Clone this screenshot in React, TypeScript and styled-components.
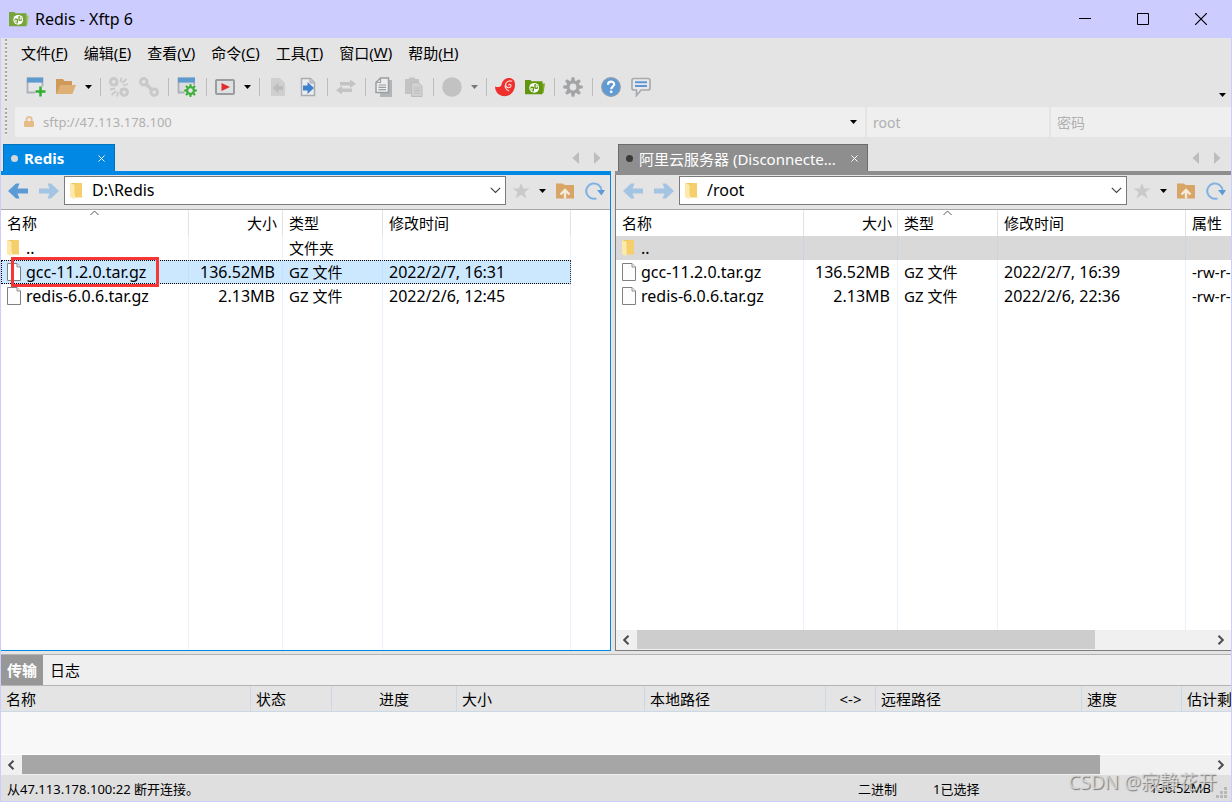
import React from 'react';
import styled, { createGlobalStyle } from 'styled-components';

const GlobalStyle = createGlobalStyle`
  *, *::before, *::after { box-sizing: border-box; }
  html, body { margin: 0; padding: 0; }
  body {
    font-family: "Noto Sans", "Noto Sans CJK SC", sans-serif;
    font-size: 15px;
    color: #000;
    background: #e4e4e4;
  }
  button, input, table {
    font: inherit;
    color: inherit;
  }
  button {
    border: 0;
    padding: 0;
    background: none;
    display: flex;
    align-items: center;
    justify-content: center;
    flex: none;
  }
  svg { display: block; flex: none; }
`;

/* ---------- window frame ---------- */

const Window = styled.div`
  position: relative;
  display: flex;
  flex-direction: column;
  min-height: 100vh;
  overflow: hidden;
  background: #e4e4e4;
  border: 1px solid #ccccff;
  border-top: 0;
`;

const TitleBar = styled.header`
  display: flex;
  align-items: center;
  height: 38px;
  padding: 0 1px 0 8px;
  background: #ccccff;
`;

const Title = styled.h1`
  flex: 1;
  margin: 0 0 0 6px;
  font-size: 16px;
  font-weight: 400;
  line-height: 24px;
`;

const CaptionButton = styled.button`
  width: 58px;
  height: 38px;
`;

/* ---------- menu, toolbar and address row ---------- */

const Band = styled.div<{ $gap?: number }>`
  display: flex;
  padding-left: 4px;
  margin-top: ${(p) => p.$gap ?? 0}px;
`;

const Gripper = styled.span`
  flex: none;
  width: 2px;
  margin: 1px 0;
  background: repeating-linear-gradient(#a6a6a6 0 2px, #f4f4f4 2px 3px, transparent 3px 4px);
`;

const BandBody = styled.div`
  flex: 1;
  min-width: 0;
`;

const MenuBar = styled.nav`
  display: flex;
  gap: 16px;
  height: 32px;
  padding: 0 0 4px 14px;
`;

const MenuItem = styled.button`
  white-space: nowrap;
  u { text-underline-offset: 2px; }
`;

const ToolBar = styled.div`
  display: flex;
  align-items: center;
  height: 34px;
  padding-left: 14px;
`;

const ToolButton = styled.button`
  width: 30px;
  height: 30px;
`;

const CaretButton = styled.button<{ $width?: number }>`
  width: ${(p) => p.$width ?? 15}px;
  height: 30px;
`;

const ToolSeparator = styled.span`
  flex: none;
  width: 8px;
  height: 18px;
  background: linear-gradient(#bcbcbc, #bcbcbc) center / 1px 100% no-repeat;
`;

const OverflowButton = styled.button`
  width: 17px;
  height: 18px;
  margin-left: auto;
  align-self: flex-end;
`;

const LoginRow = styled.form`
  display: grid;
  grid-template-columns: minmax(0, 1fr) 182px 180px;
  gap: 2px;
  height: 29px;
  padding-left: 8px;
`;

const LoginField = styled.label<{ $host?: boolean }>`
  display: flex;
  align-items: center;
  padding: 0 ${(p) => (p.$host ? 4 : 0)}px 0 ${(p) => (p.$host ? 8 : 6)}px;
  background: #efefef;
`;

const LoginInput = styled.input<{ $host?: boolean }>`
  flex: 1;
  min-width: 0;
  height: 29px;
  border: 0;
  padding: 0 0 0 ${(p) => (p.$host ? 8 : 0)}px;
  font-size: ${(p) => (p.$host ? 13 : 14)}px;
  background: none;
  outline: none;
  &::placeholder { color: #b0b0b0; opacity: 1; }
`;

/* ---------- file panes ---------- */

const Panes = styled.main`
  display: grid;
  grid-template-columns: minmax(0, 610fr) minmax(0, 616fr);
  gap: 4px;
  flex: 1;
  margin-top: 8px;
`;

const Pane = styled.section`
  display: flex;
  flex-direction: column;
  min-width: 0;
`;

const TabStrip = styled.div<{ $active: boolean }>`
  display: flex;
  align-items: center;
  height: 31px;
  padding-left: ${(p) => (p.$active ? 2 : 3)}px;
  border-bottom: 4px solid ${(p) => (p.$active ? '#0088e4' : '#8e8e8e')};
`;

const Tab = styled.div<{ $active: boolean }>`
  display: flex;
  align-items: center;
  align-self: stretch;
  width: ${(p) => (p.$active ? 112 : 250)}px;
  padding: 0 7px;
  color: #fff;
  font-weight: ${(p) => (p.$active ? 700 : 400)};
  background: ${(p) => (p.$active ? '#0088e4' : '#8e8e8e')};
  border: 1px solid ${(p) => (p.$active ? '#0072bb' : '#6c6c6c')};
  border-bottom: 0;
`;

const TabDot = styled.span<{ $active: boolean }>`
  flex: none;
  width: 7px;
  height: 7px;
  border-radius: 50%;
  background: ${(p) => (p.$active ? '#d4d8dc' : '#3a3a3a')};
`;

const TabLabel = styled.span`
  flex: 1;
  margin-left: 6px;
  overflow: hidden;
  white-space: nowrap;
`;

const TabClose = styled.button`
  width: 12px;
  height: 20px;
`;

const TabScroll = styled.div`
  display: flex;
  margin-left: auto;
  padding-right: 4px;
`;

const TabScrollButton = styled.button`
  width: 21px;
  height: 20px;
`;

const PaneBody = styled.div<{ $active: boolean }>`
  display: flex;
  flex-direction: column;
  flex: 1;
  border-style: solid;
  border-color: ${(p) => (p.$active ? '#0088e4' : '#7c7c7c')};
  border-width: ${(p) => (p.$active ? '0 1px 1px 0' : '0 0 1px 1px')};
`;

const PathBar = styled.div`
  display: flex;
  align-items: center;
  height: 35px;
  padding: 0 0 3px 1px;
  border-bottom: 1px solid #a8a8a8;
`;

const PathButton = styled.button<{ $width?: number }>`
  width: ${(p) => p.$width ?? 31}px;
  height: 30px;
`;

const PathCombo = styled.label`
  display: flex;
  align-items: center;
  flex: 1;
  min-width: 0;
  height: 29px;
  padding-left: 5px;
  background: #fff;
  border: 1px solid #7a7a7a;
`;

const PathInput = styled.input`
  flex: 1;
  min-width: 0;
  height: 27px;
  margin-left: 8px;
  padding: 0 0 2px;
  border: 0;
  outline: none;
  font-size: 16px;
  background: none;
`;

const DropButton = styled.button`
  width: 20px;
  height: 27px;
`;

const ListArea = styled.div`
  flex: 1;
  display: flex;
  min-height: 200px;
  overflow: hidden;
  background: #fff;
`;

const FileTable = styled.table`
  flex: none;
  table-layout: fixed;
  border-collapse: separate;
  border-spacing: 0;
`;

const FileHead = styled.th<{ $right?: boolean }>`
  position: relative;
  height: 26px;
  padding: 0 ${(p) => (p.$right ? 5 : 0)}px 0 6px;
  text-align: ${(p) => (p.$right ? 'right' : 'left')};
  font-weight: 400;
  line-height: 24px;
  white-space: nowrap;
  border-right: 1px solid #e2e2e2;
`;

const SortMark = styled.span`
  position: absolute;
  top: 0;
  right: 0;
  left: 0;
  display: flex;
  justify-content: center;
`;

const FileRow = styled.tr<{ $state?: 'selected' | 'cursor' }>`
  background: ${(p) =>
    p.$state === 'selected' ? '#cce8ff' : p.$state === 'cursor' ? '#d9d9d9' : 'transparent'};
  outline: ${(p) => (p.$state === 'selected' ? '1px dotted #000' : 'none')};
  outline-offset: -1px;
`;

const FileCell = styled.td<{ $right?: boolean; $latin?: boolean }>`
  position: relative;
  height: 24px;
  padding: 0 ${(p) => (p.$right ? 7 : 0)}px 0 6px;
  text-align: ${(p) => (p.$right ? 'right' : 'left')};
  font-size: ${(p) => (p.$latin ? 16 : 15)}px;
  line-height: 22px;
  white-space: nowrap;
  border-right: 1px solid rgba(170, 205, 245, 0.28);
`;

const NameBox = styled.span`
  display: flex;
  align-items: center;
  gap: 5px;
`;

const RedFrame = styled.span`
  position: absolute;
  top: -3px;
  left: 10px;
  width: 148px;
  height: 30px;
  border: 3px solid #f53636;
`;

const FillerCell = styled.td`
  padding: 0;
  border-right: 1px solid #e8f1fc;
`;

/* ---------- scroll bars ---------- */

const ScrollBar = styled.div`
  display: flex;
  flex: none;
  height: 20px;
  padding-bottom: 1px;
  background: #f0f0f0;
`;

const ScrollArrow = styled.button`
  width: 21px;
`;

const ScrollTrack = styled.div`
  flex: 1;
`;

const ScrollThumb = styled.div<{ $dark?: boolean }>`
  height: 100%;
  background: ${(p) => (p.$dark ? '#a6a6a6' : '#cdcdcd')};
`;

/* ---------- transfer panel ---------- */

const Transfer = styled.section`
  margin-top: 3px;
  border-top: 1px solid #b4b4b4;
`;

const TransferTabs = styled.div`
  display: flex;
  height: 31px;
  background: #efefef;
  border-bottom: 1px solid #b4b4b4;
`;

const TransferTab = styled.button<{ $active?: boolean }>`
  width: ${(p) => (p.$active ? 42 : 44)}px;
  padding-bottom: 2px;
  color: ${(p) => (p.$active ? '#fff' : '#000')};
  font-weight: ${(p) => (p.$active ? 700 : 400)};
  background: ${(p) => (p.$active ? '#979797' : 'none')};
`;

const TransferList = styled.div`
  height: 69px;
  overflow: hidden;
  background: #f8f8f8;
  border-bottom: 1px solid #fff;
`;

const TransferTable = styled.table`
  width: 1299px;
  table-layout: fixed;
  border-collapse: separate;
  border-spacing: 0;
`;

const TransferHead = styled.th<{ $center?: boolean }>`
  height: 26px;
  padding: 0 5px;
  text-align: ${(p) => (p.$center ? 'center' : 'left')};
  font-weight: 400;
  line-height: 24px;
  white-space: nowrap;
  background: #e4e4e4;
  border-right: 1px solid #ccd8e6;
  border-bottom: 1px solid #ccd8e6;
`;

const StatusBar = styled.footer`
  display: flex;
  align-items: center;
  height: 26px;
  padding: 0 20px 0 6px;
  font-size: 13px;
  background: #dfdfdf;
`;

const StatusText = styled.span<{ $width?: number; $right?: boolean }>`
  flex: ${(p) => (p.$width ? 'none' : '1')};
  width: ${(p) => (p.$width ? `${p.$width}px` : 'auto')};
  text-align: ${(p) => (p.$right ? 'right' : 'left')};
  white-space: nowrap;
`;

const SizeGrip = styled.span`
  position: absolute;
  right: 3px;
  bottom: 2px;
`;

const Watermark = styled.span`
  position: absolute;
  right: 14px;
  bottom: 6px;
  font-size: 19px;
  line-height: 26px;
  white-space: nowrap;
  color: rgba(222, 222, 222, 0.8);
  text-shadow: 1px 1px 1px rgba(90, 90, 90, 0.75);
  pointer-events: none;
`;

/* ---------- icons ---------- */

const Caret = ({ color = '#000' }: { color?: string }) => (
  <svg width="7" height="4" viewBox="0 0 7 4"><path d="M0 0h7L3.500 4z" fill={color} /></svg>
);

const XftpIcon = ({ fill, side }: { fill: string; side: string }) => (
  <svg width="20" height="20" viewBox="0 0 20 20">
    <path d="M16 6.500h4L18.500 16H16z" fill={side} />
    <path d="M0 3h5.500l1 1.200H17.500v13H0z" fill={fill} />
    <circle cx="9.200" cy="10.800" r="4.900" fill="#fff" />
    <path d="M10 7.300v4.200M10 11.200h2.600M8.300 14.300V10M8.300 10.300H5.800" fill="none" stroke={fill} strokeWidth="1.400" />
    <path d="M10 7.300c1.800.4 2.800 2 2.600 3.900M8.300 14.300c-1.800-.4-2.800-2-2.500-4" fill="none" stroke={fill} strokeWidth=".7" />
  </svg>
);

const NewSessionIcon = () => (
  <svg width="20" height="20" viewBox="0 0 20 20">
    <path d="M1.500 1.500h15v14h-15z" fill="#e6e6e8" stroke="#aab0b6" strokeWidth="1.800" />
    <path d="M1 .6h16v5H1z" fill="#5c9ad0" />
    <path d="M9 9.500h10v10H9z" fill="#e6e6e8" />
    <path d="M14.500 9.500v10M9.500 14.500h10" stroke="#2eb02e" strokeWidth="2.500" />
  </svg>
);

const OpenFolderIcon = () => (
  <svg width="20" height="20" viewBox="0 0 20 20">
    <path d="M0 2h7l1.500 2H16v13H0z" fill="#cf9a58" />
    <path d="M4.500 8H20l-3.600 9H0z" fill="#deb076" />
  </svg>
);

const LinkShape = ({ broken }: { broken?: boolean }) => (
  <svg width="20" height="20" viewBox="0 0 20 20" fill="none" stroke="#c9c9c9">
    <circle cx="4.800" cy="4.800" r="3.300" strokeWidth="3" />
    <circle cx="15.200" cy="15.200" r="3.300" strokeWidth="3" />
    {broken ? (
      <path
        d="M6.500 6.500l2 2M11.500 11.500l2 2M12.500.5 11.500 5M19 7l-5 1.500M17.500 2l-4.500 4M1 12.500l5-1M2.500 18l4.500-4M8 19.500l1-4.500"
        strokeWidth="1.800"
      />
    ) : (
      <path d="M6.500 6.500l7 7" strokeWidth="3.600" />
    )}
  </svg>
);

const Gear = ({ color, hole, cx = 10, cy = 10, scale = 1 }: {
  color: string; hole: string; cx?: number; cy?: number; scale?: number;
}) => (
  <g transform={`translate(${cx} ${cy}) scale(${scale})`}>
    {[0, 45, 90, 135].map((a) => (
      <path key={a} d="M-1.300-9.800h2.600l.8 3.800v12l-.8 3.800h-2.600l-.8-3.800v-12z" fill={color} transform={`rotate(${a})`} />
    ))}
    <circle r="6.400" fill={color} />
    <circle r="3.400" fill={hole} />
  </g>
);

const SessionPropsIcon = () => (
  <svg width="20" height="20" viewBox="0 0 20 20">
    <path d="M1.500 1.500h15.500v14h-15.500z" fill="#dcdcde" stroke="#aab0b6" strokeWidth="1.800" />
    <path d="M1 .6h17v5H1z" fill="#5c9ad0" />
    <circle cx="13.500" cy="13.500" r="6.500" fill="#e6e6e6" />
    <Gear color="#3fb03f" hole="#e6e6e6" cx={13.5} cy={13.5} scale={0.66} />
  </svg>
);

const RunIcon = () => (
  <svg width="20" height="20" viewBox="0 0 20 20">
    <rect x="1" y="3" width="18" height="14" rx="1" fill="#dfe0e2" stroke="#9a9da0" strokeWidth="2" />
    <path d="M6.500 6 15 10l-8.500 4z" fill="#df2c2c" />
  </svg>
);

const PageArrowIcon = ({ enabled }: { enabled?: boolean }) => (
  <svg width="20" height="20" viewBox="0 0 20 20">
    {enabled ? (
      <>
        <path d="M3.500 1.500h9l4 4v13h-13z" fill="#ececec" stroke="#a9adb1" strokeWidth="1.500" />
        <path d="M12 1v5h5" fill="#c2c5c8" stroke="#a9adb1" />
        <path d="M5 8.500h4.500V5l6.500 6-6.500 6v-3.500H5z" fill="#3f82cc" />
      </>
    ) : (
      <>
        <path d="M3 1h9l5 5v13H3z" fill="#cfcfcf" />
        <path d="M15 9h-4.500V5.500L4.500 11l6 5.500V13H15z" fill="#bcbcbc" />
      </>
    )}
  </svg>
);

const SwapIcon = () => (
  <svg width="20" height="20" viewBox="0 0 20 20" fill="#c3c3c3">
    <path d="M4 5h10V2.500l6 4.200-6 4.300V8.500H4z" />
    <path d="M16 11.500H6V9l-6 4.300 6 4.200V15h10z" />
  </svg>
);

const CopyIcon = () => (
  <svg width="20" height="20" viewBox="0 0 20 20">
    <path d="M6 3h12v17H6z" fill="#b2b5b8" />
    <path d="M6.500 1h8v14.500H2v-10z" fill="#ededed" stroke="#9b9ea1" strokeWidth="1.500" />
    <path d="M6.500 1V5.500H2M4.500 8h7.500M4.500 10.300h7.500M4.500 12.600h7.500" fill="none" stroke="#9b9ea1" strokeWidth="1.200" />
  </svg>
);

const PasteIcon = () => (
  <svg width="20" height="20" viewBox="0 0 20 20">
    <path d="M1 2h4V.6h6V2h4v15H1z" fill="#c3c3c3" />
    <path d="M7.500 5.500h7l3.500 3.500v10.500H7.500z" fill="#d0d0d0" stroke="#bcbcbc" />
    <path d="M10 11h6M10 13.500h6M10 16h6" stroke="#bcbcbc" />
  </svg>
);

const DiscIcon = () => (
  <svg width="20" height="20" viewBox="0 0 20 20"><circle cx="10" cy="10" r="9.800" fill="#c2c2c2" /></svg>
);

const XshellIcon = () => (
  <svg width="20" height="20" viewBox="0 0 20 20">
    <path
      d="M0 9.500c3 1.200 6 .6 6.600-2.100C7.400 3.600 10.400 1 14 1c3.600 0 6 2.400 6 6.400 0 6.600-4.400 11.800-10.400 11.800C4.600 19.200.2 15.600 0 9.500z"
      fill="#ee2f2c"
    />
    <path
      d="M13.800 8.300c-.2-1.200 1.400-1.500 2-.4.700 1.500-.6 3-2.200 2.900-2.200-.1-3.400-2.300-2.700-4.300.9-2.300 3.700-3.200 5.900-2.200M10.900 6.500c-1.600 3-.4 6.300 2.900 7.300"
      fill="none" stroke="#f8dedc" strokeWidth="1.100" strokeLinecap="round"
    />
  </svg>
);

const GearIcon = () => (
  <svg width="20" height="20" viewBox="0 0 20 20"><Gear color="#a2a4a6" hole="#e4e4e4" /></svg>
);

const HelpIcon = () => (
  <svg width="20" height="20" viewBox="0 0 20 20">
    <circle cx="10" cy="10" r="9.300" fill="#5f9ad4" stroke="#8d9dae" strokeWidth="1.200" />
    <path d="M7 7.700c0-4 6.200-3.900 6.200-.5 0 2.300-3 2.300-3 5" fill="none" stroke="#fff" strokeWidth="2.200" />
    <circle cx="10.200" cy="14.800" r="1.400" fill="#fff" />
  </svg>
);

const FeedbackIcon = () => (
  <svg width="20" height="20" viewBox="0 0 20 20">
    <path
      d="M3 1.500h14q2 0 2 2V11q0 2-2 2h-7l-4.500 5.500V13H3q-2 0-2-2V3.500q0-2 2-2z"
      fill="#e8e8e8" stroke="#a7abaf" strokeWidth="1.700"
    />
    <path d="M4 5.300h12M4 8.900h12" stroke="#5c98d6" strokeWidth="2" />
  </svg>
);

const LockIcon = () => (
  <svg width="12" height="12" viewBox="0 0 12 12">
    <path d="M3.500 5.500V3.600a2.600 2.600 0 0 1 5.200 0v1.900" fill="none" stroke="#e6c090" strokeWidth="1.800" />
    <rect x="1" y="5" width="10" height="6" rx="1" fill="#e6bd88" />
  </svg>
);

const ArrowIcon = ({ color, right }: { color: string; right?: boolean }) => (
  <svg width="20" height="16" viewBox="0 0 20 16">
    <path d={right ? 'M0 5.500h10.500L8.500.5h3.500L20 8l-8 7.500H8.500l2-5H0z' : 'M20 5.500H9.500l2-5H8L0 8l8 7.500h3.500l-2-5H20z'} fill={color} />
  </svg>
);

const FolderIcon = () => (
  <svg width="14" height="18" viewBox="0 0 14 18">
    <path d="M2 1h10v12.500l.5 2H5z" fill="#f5cf6c" />
    <path d="M0 1l4.500 1.500v14.800L0 15z" fill="#fde9a9" />
    <path d="M0 1h7l-2.500 1.500z" fill="#efc560" />
  </svg>
);

const FileIcon = () => (
  <svg width="14" height="18" viewBox="0 0 14 18">
    <path d="M.5.500h9.500l3.500 3.500v13.500H.5z" fill="#fdfdfd" stroke="#808080" />
    <path d="M10 .5V4h3.500" fill="#f0f0f0" stroke="#909090" />
  </svg>
);

const ChevronIcon = () => (
  <svg width="11" height="7" viewBox="0 0 11 7"><path d="M.8.8l4.700 4.700L10.200.8" fill="none" stroke="#444" strokeWidth="1.200" /></svg>
);

const SortIcon = () => (
  <svg width="9" height="6" viewBox="0 0 9 6"><path d="M.5 5l4-4 4 4" fill="none" stroke="#555" /></svg>
);

const StarIcon = () => (
  <svg width="18" height="16" viewBox="0 0 18 16">
    <path d="M9 0l2.200 5.600H17.500l-5 3.700 2 6.200L9 11.800l-5.500 3.700 2-6.200-5-3.700h6.300z" fill="#c9cacc" />
  </svg>
);

const UpFolderIcon = () => (
  <svg width="18" height="16" viewBox="0 0 18 16">
    <path d="M0 .5h7l1.500 1.500H18v13.500H0z" fill="#d9a566" />
    <path d="M9 15.500V7M4.500 11.500 9 7l4.500 4.500" fill="none" stroke="#f5ebdd" strokeWidth="2.400" />
  </svg>
);

const RefreshIcon = () => (
  <svg width="20" height="18" viewBox="0 0 20 18">
    <path d="M11.500 16.400A7.700 7.700 0 1 1 16.600 8.500" fill="none" stroke="#7fb2e2" strokeWidth="2" />
    <path d="M12 8h8l-3.500 5.500z" fill="#5c9bd8" />
  </svg>
);

const TriangleIcon = ({ right }: { right?: boolean }) => (
  <svg width="8" height="12" viewBox="0 0 8 12">
    <path d={right ? 'M1 0v12l6.500-6z' : 'M7 0v12L.5 6z'} fill="#bdbdbd" />
  </svg>
);

const CloseX = () => (
  <svg width="7" height="7" viewBox="0 0 7 7"><path d="M.5.500l6 6M6.500.500l-6 6" stroke="#fff" /></svg>
);

const ScrollChevron = ({ right }: { right?: boolean }) => (
  <svg width="8" height="10" viewBox="0 0 8 10">
    <path d={right ? 'M1.500.700l4.300 4.300-4.300 4.300' : 'M5.500.700L1.200 5l4.300 4.300'} fill="none" stroke="#4d4d4d" strokeWidth="2" />
  </svg>
);

/* ---------- data ---------- */

const menus = [
  ['文件', 'F'], ['编辑', 'E'], ['查看', 'V'], ['命令', 'C'],
  ['工具', 'T'], ['窗口', 'W'], ['帮助', 'H'],
];

type Entry = {
  name: string; size: string; type: string; time: string; attr?: string;
  folder?: boolean; state?: 'selected' | 'cursor'; framed?: boolean;
};

const localFiles: Entry[] = [
  { name: '..', size: '', type: '文件夹', time: '', folder: true },
  { name: 'gcc-11.2.0.tar.gz', size: '136.52MB', type: 'GZ 文件', time: '2022/2/7, 16:31', state: 'selected', framed: true },
  { name: 'redis-6.0.6.tar.gz', size: '2.13MB', type: 'GZ 文件', time: '2022/2/6, 12:45' },
];

const remoteFiles: Entry[] = [
  { name: '..', size: '', type: '', time: '', attr: '', folder: true, state: 'cursor' },
  { name: 'gcc-11.2.0.tar.gz', size: '136.52MB', type: 'GZ 文件', time: '2022/2/7, 16:39', attr: '-rw-r--r--' },
  { name: 'redis-6.0.6.tar.gz', size: '2.13MB', type: 'GZ 文件', time: '2022/2/6, 22:36', attr: '-rw-r--r--' },
];

const transferColumns: { label: string; width: number; center?: boolean }[] = [
  { label: '名称', width: 250 },
  { label: '状态', width: 81 },
  { label: '进度', width: 125, center: true },
  { label: '大小', width: 188 },
  { label: '本地路径', width: 181 },
  { label: '<->', width: 50, center: true },
  { label: '远程路径', width: 206 },
  { label: '速度', width: 100 },
  { label: '估计剩余时间', width: 118 },
];

/* ---------- parts ---------- */

const HScroll = ({ percent, dark }: { percent: number; dark?: boolean }) => (
  <ScrollBar>
    <ScrollArrow aria-label="向左滚动"><ScrollChevron /></ScrollArrow>
    <ScrollTrack><ScrollThumb $dark={dark} style={{ width: `${percent}%` }} /></ScrollTrack>
    <ScrollArrow aria-label="向右滚动"><ScrollChevron right /></ScrollArrow>
  </ScrollBar>
);

const FileList = ({ files, sorted }: { files: Entry[]; sorted: string }) => {
  const hasAttr = files.some((f) => f.attr !== undefined);
  const columns: [string, number][] = [['名称', 188], ['大小', 94], ['类型', 100], ['修改时间', 188]];
  if (hasAttr) columns.push(['属性', 100]);
  const total = columns.reduce((sum, c) => sum + c[1], 0);
  return (
    <ListArea>
      <FileTable style={{ width: total }}>
        <colgroup>
          {columns.map(([label, width]) => <col key={label} width={width} />)}
        </colgroup>
        <thead>
          <tr>
            {columns.map(([label]) => (
              <FileHead key={label} scope="col" $right={label === '大小'}>
                {label}
                {label === sorted && <SortMark><SortIcon /></SortMark>}
              </FileHead>
            ))}
          </tr>
        </thead>
        <tbody>
          {files.map((f) => (
            <FileRow key={f.name} $state={f.state}>
              <FileCell $latin>
                <NameBox>{f.folder ? <FolderIcon /> : <FileIcon />}{f.name}</NameBox>
                {f.framed && <RedFrame />}
              </FileCell>
              <FileCell $latin $right>{f.size}</FileCell>
              <FileCell>{f.type}</FileCell>
              <FileCell $latin>{f.time}</FileCell>
              {hasAttr && <FileCell>{f.attr}</FileCell>}
            </FileRow>
          ))}
          <tr aria-hidden="true">
            {columns.map(([label]) => <FillerCell key={label} />)}
          </tr>
        </tbody>
      </FileTable>
    </ListArea>
  );
};

const FilePane = ({ active, title, path, files, sorted, scroll }: {
  active: boolean; title: string; path: string; files: Entry[]; sorted: string; scroll?: number;
}) => (
  <Pane>
    <TabStrip $active={active}>
      <Tab $active={active}>
        <TabDot $active={active} />
        <TabLabel>{title}</TabLabel>
        <TabClose aria-label="关闭"><CloseX /></TabClose>
      </Tab>
      <TabScroll>
        <TabScrollButton aria-label="上一个"><TriangleIcon /></TabScrollButton>
        <TabScrollButton aria-label="下一个"><TriangleIcon right /></TabScrollButton>
      </TabScroll>
    </TabStrip>
    <PaneBody $active={active}>
      <PathBar>
        <PathButton aria-label="后退"><ArrowIcon color={active ? '#5b9bd5' : '#a3c4e2'} /></PathButton>
        <PathButton aria-label="前进"><ArrowIcon color="#a3c4e2" right /></PathButton>
        <PathCombo>
          <FolderIcon />
          <PathInput aria-label="路径" defaultValue={path} />
          <DropButton aria-label="展开"><ChevronIcon /></DropButton>
        </PathCombo>
        <PathButton aria-label="收藏" $width={30}><StarIcon /></PathButton>
        <CaretButton aria-label="收藏列表" $width={13}><Caret /></CaretButton>
        <PathButton aria-label="上级"><UpFolderIcon /></PathButton>
        <PathButton aria-label="刷新" $width={30}><RefreshIcon /></PathButton>
      </PathBar>
      <FileList files={files} sorted={sorted} />
      {scroll !== undefined && <HScroll percent={scroll} />}
    </PaneBody>
  </Pane>
);

export default function App() {
  return (
    <>
      <GlobalStyle />
      <Window>
        <TitleBar>
          <XftpIcon fill="#78a43c" side="#a9c770" />
          <Title>Redis - Xftp 6</Title>
          <CaptionButton aria-label="最小化">
            <svg width="12" height="12" viewBox="0 0 12 12"><path d="M0 5.500h12" stroke="#000" /></svg>
          </CaptionButton>
          <CaptionButton aria-label="最大化">
            <svg width="12" height="12" viewBox="0 0 12 12"><path d="M.5.500h11v11H.5z" fill="none" stroke="#000" /></svg>
          </CaptionButton>
          <CaptionButton aria-label="关闭">
            <svg width="12" height="12" viewBox="0 0 12 12"><path d="M0 0l12 12M12 0L0 12" stroke="#000" strokeWidth="1.200" /></svg>
          </CaptionButton>
        </TitleBar>

        <Band>
          <Gripper />
          <BandBody>
            <MenuBar>
              {menus.map(([label, key]) => (
                <MenuItem key={key}>{label}(<u>{key}</u>)</MenuItem>
              ))}
            </MenuBar>
            <ToolBar>
              <ToolButton aria-label="新建"><NewSessionIcon /></ToolButton>
              <ToolButton aria-label="打开"><OpenFolderIcon /></ToolButton>
              <CaretButton aria-label="打开列表"><Caret /></CaretButton>
              <ToolSeparator />
              <ToolButton aria-label="断开"><LinkShape broken /></ToolButton>
              <ToolButton aria-label="重新连接"><LinkShape /></ToolButton>
              <ToolSeparator />
              <ToolButton aria-label="属性"><SessionPropsIcon /></ToolButton>
              <ToolSeparator />
              <ToolButton aria-label="运行"><RunIcon /></ToolButton>
              <CaretButton aria-label="运行列表"><Caret /></CaretButton>
              <ToolSeparator />
              <ToolButton aria-label="下载"><PageArrowIcon /></ToolButton>
              <ToolButton aria-label="上传"><PageArrowIcon enabled /></ToolButton>
              <ToolSeparator />
              <ToolButton aria-label="同步"><SwapIcon /></ToolButton>
              <ToolSeparator />
              <ToolButton aria-label="复制"><CopyIcon /></ToolButton>
              <ToolButton aria-label="粘贴"><PasteIcon /></ToolButton>
              <ToolSeparator />
              <ToolButton aria-label="编码"><DiscIcon /></ToolButton>
              <CaretButton aria-label="编码列表"><Caret color="#777" /></CaretButton>
              <ToolSeparator />
              <ToolButton aria-label="Xshell"><XshellIcon /></ToolButton>
              <ToolButton aria-label="Xftp"><XftpIcon fill="#62960e" side="#79ab1c" /></ToolButton>
              <ToolSeparator />
              <ToolButton aria-label="选项"><GearIcon /></ToolButton>
              <ToolSeparator />
              <ToolButton aria-label="帮助"><HelpIcon /></ToolButton>
              <ToolButton aria-label="反馈"><FeedbackIcon /></ToolButton>
              <OverflowButton aria-label="更多"><Caret /></OverflowButton>
            </ToolBar>
          </BandBody>
        </Band>

        <Band $gap={3}>
          <Gripper />
          <BandBody>
            <LoginRow>
              <LoginField $host>
                <LockIcon />
                <LoginInput $host aria-label="主机" placeholder="sftp://47.113.178.100" />
                <CaretButton type="button" aria-label="主机列表"><Caret /></CaretButton>
              </LoginField>
              <LoginField><LoginInput aria-label="用户名" placeholder="root" /></LoginField>
              <LoginField><LoginInput aria-label="密码" type="password" placeholder="密码" /></LoginField>
            </LoginRow>
          </BandBody>
        </Band>

        <Panes>
          <FilePane active title="Redis" path="D:\Redis" files={localFiles} sorted="名称" />
          <FilePane
            active={false} title="阿里云服务器 (Disconnecte..." path="/root"
            files={remoteFiles} sorted="类型" scroll={80}
          />
        </Panes>

        <Transfer>
          <TransferTabs>
            <TransferTab $active>传输</TransferTab>
            <TransferTab>日志</TransferTab>
          </TransferTabs>
          <TransferList>
            <TransferTable>
              <colgroup>
                {transferColumns.map((c) => <col key={c.label} width={c.width} />)}
              </colgroup>
              <thead>
                <tr>
                  {transferColumns.map((c) => (
                    <TransferHead key={c.label} scope="col" $center={c.center}>{c.label}</TransferHead>
                  ))}
                </tr>
              </thead>
            </TransferTable>
          </TransferList>
          <HScroll percent={90.7} dark />
          <StatusBar>
            <StatusText>从47.113.178.100:22 断开连接。</StatusText>
            <StatusText $width={75}>二进制</StatusText>
            <StatusText $width={150}>1已选择</StatusText>
            <StatusText $width={128} $right>136.52MB</StatusText>
          </StatusBar>
        </Transfer>
        <SizeGrip>
          <svg width="12" height="12" viewBox="0 0 12 12" fill="#b8b8b8">
            <path d="M8 0h3v3H8zM4 4h3v3H4zM8 4h3v3H8zM0 8h3v3H0zM4 8h3v3H4zM8 8h3v3H8z" />
          </svg>
        </SizeGrip>
        <Watermark>CSDN @寂静花开</Watermark>
      </Window>
    </>
  );
}
